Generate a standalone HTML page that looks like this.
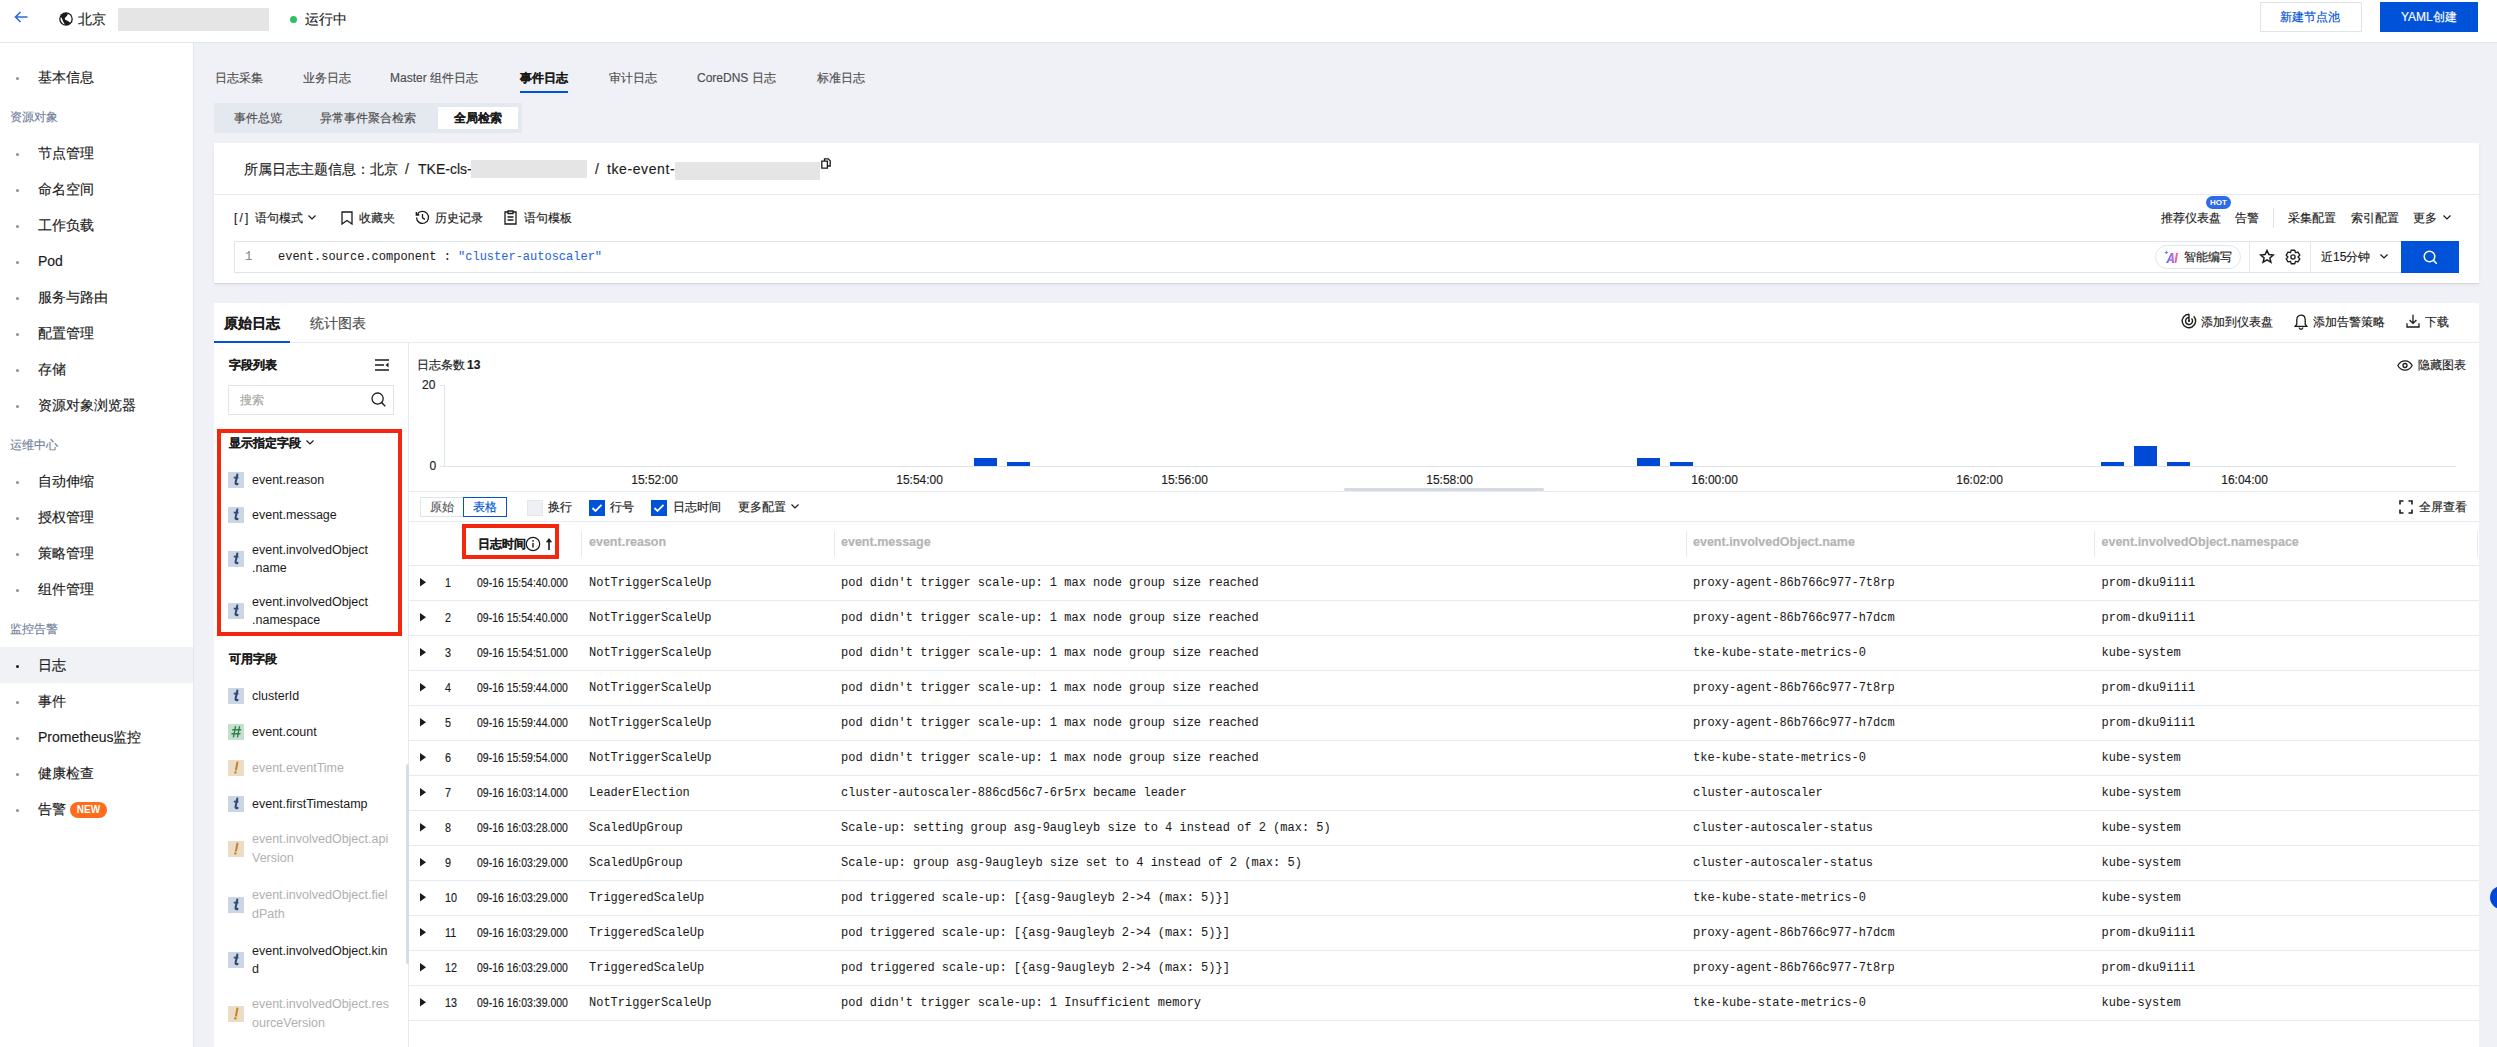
<!DOCTYPE html><html><head><meta charset="utf-8"><style>
*{box-sizing:border-box;margin:0;padding:0}
html,body{width:2497px;height:1047px;overflow:hidden;background:#f0f1f6;font-family:"Liberation Sans",sans-serif;color:#1b1b1b;font-size:12px}
.a{position:absolute}
.t{position:absolute;white-space:nowrap;line-height:20px;-webkit-text-stroke:0.15px}
.mono{font-family:"Liberation Mono",monospace;-webkit-text-stroke:0.05px}
.hdr{left:0;top:0;width:2497px;height:43px;background:#fff;border-bottom:1px solid #e1e5ed}
.side{left:0;top:43px;width:193px;height:1004px;background:#fff}
.panel{background:#fff}
.bd{background:#e5e9f0}
svg{position:absolute;overflow:visible}
</style></head><body>
<div class="a hdr"></div>
<svg style="left:14px;top:11px" width="14" height="12" viewBox="0 0 14 12"><path d="M13.5 6H1.5M6.5 1L1.5 6l5 5" fill="none" stroke="#2c6ae6" stroke-width="1.6"/></svg>
<svg style="left:59px;top:12px" width="14" height="14" viewBox="0 0 14 14"><defs><clipPath id="gc"><circle cx="7" cy="7" r="5.5"/></clipPath></defs><circle cx="7" cy="7" r="6.8" fill="#1b1b1b"/><g clip-path="url(#gc)" fill="#fff"><path d="M0 4.6L2.1 5.1 3.0 6.8 3.9 8.7 4.7 10.5 5.7 12.2 5.8 14 0 14z"/><path d="M9.6 0L14 0 14 11 11.4 10.9 10.3 10.1 9.4 9.3 7.9 8.6 6.1 7.7 5.7 6.5 6.8 5.1 8.0 3.7 8.8 2.2z"/></g></svg>
<div class="t" style="left:78px;top:9.0px;font-size:14px;color:#1b1b1b;font-weight:500;line-height:20px;">北京</div>
<div class="a" style="left:118px;top:8px;width:151px;height:23px;background:#e5e5e5;"></div>
<div class="a" style="left:290px;top:16px;width:7px;height:7px;border-radius:50%;background:#2fbf63"></div>
<div class="t" style="left:305px;top:8.5px;font-size:14px;color:#1b1b1b;font-weight:normal;line-height:20px;">运行中</div>
<div class="a" style="left:2260px;top:2px;width:102px;height:30px;border:1px solid #dfe4ec;background:#fff"></div>
<div class="t" style="left:2280px;top:7.0px;font-size:12px;color:#0052d9;font-weight:normal;line-height:20px;">新建节点池</div>
<div class="a" style="left:2380px;top:2px;width:98px;height:30px;background:#0052d9;"></div>
<div class="t" style="left:2401px;top:7.0px;font-size:12px;color:#fff;font-weight:normal;line-height:20px;">YAML创建</div>
<div class="a side"></div>
<div class="a" style="left:193px;top:43px;width:1px;height:1004px;background:#e1e5ed;"></div>
<div class="a" style="left:16px;top:76.5px;width:3px;height:3px;border-radius:50%;background:#8a8f99"></div>
<div class="t" style="left:38px;top:67.0px;font-size:14px;color:#1b1b1b;font-weight:normal;line-height:20px;">基本信息</div>
<div class="t" style="left:10px;top:107.0px;font-size:12px;color:#72809a;font-weight:normal;line-height:20px;">资源对象</div>
<div class="a" style="left:16px;top:152.5px;width:3px;height:3px;border-radius:50%;background:#8a8f99"></div>
<div class="t" style="left:38px;top:143.0px;font-size:14px;color:#1b1b1b;font-weight:normal;line-height:20px;">节点管理</div>
<div class="a" style="left:16px;top:188.5px;width:3px;height:3px;border-radius:50%;background:#8a8f99"></div>
<div class="t" style="left:38px;top:179.0px;font-size:14px;color:#1b1b1b;font-weight:normal;line-height:20px;">命名空间</div>
<div class="a" style="left:16px;top:224.5px;width:3px;height:3px;border-radius:50%;background:#8a8f99"></div>
<div class="t" style="left:38px;top:215.0px;font-size:14px;color:#1b1b1b;font-weight:normal;line-height:20px;">工作负载</div>
<div class="a" style="left:16px;top:260.5px;width:3px;height:3px;border-radius:50%;background:#8a8f99"></div>
<div class="t" style="left:38px;top:251.0px;font-size:14px;color:#1b1b1b;font-weight:normal;line-height:20px;">Pod</div>
<div class="a" style="left:16px;top:296.5px;width:3px;height:3px;border-radius:50%;background:#8a8f99"></div>
<div class="t" style="left:38px;top:287.0px;font-size:14px;color:#1b1b1b;font-weight:normal;line-height:20px;">服务与路由</div>
<div class="a" style="left:16px;top:332.5px;width:3px;height:3px;border-radius:50%;background:#8a8f99"></div>
<div class="t" style="left:38px;top:323.0px;font-size:14px;color:#1b1b1b;font-weight:normal;line-height:20px;">配置管理</div>
<div class="a" style="left:16px;top:368.5px;width:3px;height:3px;border-radius:50%;background:#8a8f99"></div>
<div class="t" style="left:38px;top:359.0px;font-size:14px;color:#1b1b1b;font-weight:normal;line-height:20px;">存储</div>
<div class="a" style="left:16px;top:404.5px;width:3px;height:3px;border-radius:50%;background:#8a8f99"></div>
<div class="t" style="left:38px;top:395.0px;font-size:14px;color:#1b1b1b;font-weight:normal;line-height:20px;">资源对象浏览器</div>
<div class="t" style="left:10px;top:435.0px;font-size:12px;color:#72809a;font-weight:normal;line-height:20px;">运维中心</div>
<div class="a" style="left:16px;top:480.5px;width:3px;height:3px;border-radius:50%;background:#8a8f99"></div>
<div class="t" style="left:38px;top:471.0px;font-size:14px;color:#1b1b1b;font-weight:normal;line-height:20px;">自动伸缩</div>
<div class="a" style="left:16px;top:516.5px;width:3px;height:3px;border-radius:50%;background:#8a8f99"></div>
<div class="t" style="left:38px;top:507.0px;font-size:14px;color:#1b1b1b;font-weight:normal;line-height:20px;">授权管理</div>
<div class="a" style="left:16px;top:552.5px;width:3px;height:3px;border-radius:50%;background:#8a8f99"></div>
<div class="t" style="left:38px;top:543.0px;font-size:14px;color:#1b1b1b;font-weight:normal;line-height:20px;">策略管理</div>
<div class="a" style="left:16px;top:588.5px;width:3px;height:3px;border-radius:50%;background:#8a8f99"></div>
<div class="t" style="left:38px;top:579.0px;font-size:14px;color:#1b1b1b;font-weight:normal;line-height:20px;">组件管理</div>
<div class="t" style="left:10px;top:619.0px;font-size:12px;color:#72809a;font-weight:normal;line-height:20px;">监控告警</div>
<div class="a" style="left:0px;top:647px;width:193px;height:36px;background:#f0f2f6;"></div>
<div class="a" style="left:16px;top:664.5px;width:3px;height:3px;border-radius:50%;background:#1b1b1b"></div>
<div class="t" style="left:38px;top:655.0px;font-size:14px;color:#1b1b1b;font-weight:normal;line-height:20px;">日志</div>
<div class="a" style="left:16px;top:700.5px;width:3px;height:3px;border-radius:50%;background:#8a8f99"></div>
<div class="t" style="left:38px;top:691.0px;font-size:14px;color:#1b1b1b;font-weight:normal;line-height:20px;">事件</div>
<div class="a" style="left:16px;top:736.5px;width:3px;height:3px;border-radius:50%;background:#8a8f99"></div>
<div class="t" style="left:38px;top:727.0px;font-size:14px;color:#1b1b1b;font-weight:normal;line-height:20px;">Prometheus监控</div>
<div class="a" style="left:16px;top:772.5px;width:3px;height:3px;border-radius:50%;background:#8a8f99"></div>
<div class="t" style="left:38px;top:763.0px;font-size:14px;color:#1b1b1b;font-weight:normal;line-height:20px;">健康检查</div>
<div class="a" style="left:16px;top:808.5px;width:3px;height:3px;border-radius:50%;background:#8a8f99"></div>
<div class="t" style="left:38px;top:799.0px;font-size:14px;color:#1b1b1b;font-weight:normal;line-height:20px;">告警</div>
<div class="a" style="left:70px;top:802px;width:37px;height:16px;border-radius:8px;background:#ff6c1a;color:#fff;font-size:10px;font-weight:bold;line-height:16px;text-align:center">NEW</div>
<div class="t" style="left:215px;top:68.0px;font-size:12px;color:#4d4d4d;font-weight:normal;line-height:20px;">日志采集</div>
<div class="t" style="left:303px;top:68.0px;font-size:12px;color:#4d4d4d;font-weight:normal;line-height:20px;">业务日志</div>
<div class="t" style="left:390px;top:68.0px;font-size:12px;color:#4d4d4d;font-weight:normal;line-height:20px;">Master 组件日志</div>
<div class="t" style="left:520px;top:68.0px;font-size:12px;color:#1b1b1b;font-weight:bold;line-height:20px;">事件日志</div>
<div class="t" style="left:609px;top:68.0px;font-size:12px;color:#4d4d4d;font-weight:normal;line-height:20px;">审计日志</div>
<div class="t" style="left:697px;top:68.0px;font-size:12px;color:#4d4d4d;font-weight:normal;line-height:20px;">CoreDNS 日志</div>
<div class="t" style="left:817px;top:68.0px;font-size:12px;color:#4d4d4d;font-weight:normal;line-height:20px;">标准日志</div>
<div class="a" style="left:520px;top:91px;width:48px;height:2px;background:#0052d9;"></div>
<div class="a" style="left:214px;top:103px;width:308px;height:30px;background:#e4e8ef;"></div>
<div class="a" style="left:438px;top:107px;width:80px;height:22px;background:#fff;"></div>
<div class="t" style="left:234px;top:107.5px;font-size:12px;color:#4d4d4d;font-weight:normal;line-height:20px;">事件总览</div>
<div class="t" style="left:320px;top:107.5px;font-size:12px;color:#4d4d4d;font-weight:normal;line-height:20px;">异常事件聚合检索</div>
<div class="t" style="left:454px;top:107.5px;font-size:12px;color:#1b1b1b;font-weight:bold;line-height:20px;">全局检索</div>
<div class="a panel" style="left:214px;top:143px;width:2265px;height:140px;box-shadow:0 1px 0 #d4d6dc,0 2px 4px rgba(0,0,0,.05)"></div>
<div class="a" style="left:214px;top:194px;width:2265px;height:1px;background:#e5e9f0;"></div>
<div class="t" style="left:244px;top:159.0px;font-size:14px;color:#1b1b1b;font-weight:normal;line-height:20px;">所属日志主题信息：</div>
<div class="t" style="left:370px;top:159.0px;font-size:14px;color:#1b1b1b;font-weight:normal;line-height:20px;">北京</div>
<div class="t" style="left:405px;top:159.0px;font-size:14px;color:#1b1b1b;font-weight:normal;line-height:20px;">/</div>
<div class="t" style="left:418px;top:159.0px;font-size:14px;color:#1b1b1b;font-weight:normal;line-height:20px;">TKE-cls-</div>
<div class="a" style="left:471px;top:160px;width:116px;height:18px;background:#e5e5e5;"></div>
<div class="t" style="left:595px;top:159.0px;font-size:14px;color:#1b1b1b;font-weight:normal;line-height:20px;">/</div>
<div class="t" style="left:607px;top:159.0px;font-size:14px;color:#1b1b1b;font-weight:normal;line-height:20px;letter-spacing:0.6px">tke-event-</div>
<div class="a" style="left:675px;top:162px;width:145px;height:18px;background:#e5e5e5;"></div>
<svg style="left:821px;top:158px" width="10" height="11" viewBox="0 0 10 11"><path d="M3.5 3V.8h3.7L9.2 2.8V8H7M.8 3.2h5.6V10.2H.8z" fill="none" stroke="#1b1b1b" stroke-width="1.3"/></svg>
<div class="t" style="left:234px;top:207.5px;font-size:12px;color:#1b1b1b;font-weight:normal;line-height:20px;letter-spacing:2.2px">[/]</div>
<div class="t" style="left:255px;top:207.5px;font-size:12px;color:#1b1b1b;font-weight:normal;line-height:20px;">语句模式</div>
<svg style="left:308px;top:215px" width="8" height="5" viewBox="0 0 8 5"><path d="M.5.5L4 4 7.5.5" fill="none" stroke="#1b1b1b" stroke-width="1.2"/></svg>
<svg style="left:341px;top:211px" width="12" height="14" viewBox="0 0 12 14"><path d="M1 1h10v12L6 9.5 1 13z" fill="none" stroke="#1b1b1b" stroke-width="1.3"/></svg>
<div class="t" style="left:359px;top:207.5px;font-size:12px;color:#1b1b1b;font-weight:normal;line-height:20px;">收藏夹</div>
<svg style="left:415px;top:210px" width="15" height="15" viewBox="0 0 15 15"><path d="M2.2 4.6A6 6 0 1 1 1.5 7.5M1.3 2v3h3M7.5 4v3.8l2.4 1.6" fill="none" stroke="#1b1b1b" stroke-width="1.3"/></svg>
<div class="t" style="left:435px;top:207.5px;font-size:12px;color:#1b1b1b;font-weight:normal;line-height:20px;">历史记录</div>
<svg style="left:504px;top:210px" width="13" height="15" viewBox="0 0 13 15"><path d="M4 2H1v12h11V2H9M4 1h5v2.5H4zM3.5 7h6M3.5 10h6" fill="none" stroke="#1b1b1b" stroke-width="1.3"/></svg>
<div class="t" style="left:524px;top:207.5px;font-size:12px;color:#1b1b1b;font-weight:normal;line-height:20px;">语句模板</div>
<div class="t" style="left:2161px;top:207.5px;font-size:12px;color:#1b1b1b;font-weight:normal;line-height:20px;">推荐仪表盘</div>
<div class="a" style="left:2206px;top:196px;width:25px;height:13px;border-radius:7px;background:#2e6be6;color:#fff;font-size:8px;font-weight:bold;line-height:13px;text-align:center">HOT</div>
<div class="t" style="left:2235px;top:207.5px;font-size:12px;color:#1b1b1b;font-weight:normal;line-height:20px;">告警</div>
<div class="a" style="left:2273px;top:208px;width:1px;height:20px;background:#dfe3ea;"></div>
<div class="t" style="left:2288px;top:207.5px;font-size:12px;color:#1b1b1b;font-weight:normal;line-height:20px;">采集配置</div>
<div class="t" style="left:2351px;top:207.5px;font-size:12px;color:#1b1b1b;font-weight:normal;line-height:20px;">索引配置</div>
<div class="t" style="left:2413px;top:207.5px;font-size:12px;color:#1b1b1b;font-weight:normal;line-height:20px;">更多</div>
<svg style="left:2443px;top:215px" width="8" height="5" viewBox="0 0 8 5"><path d="M.5.5L4 4 7.5.5" fill="none" stroke="#1b1b1b" stroke-width="1.2"/></svg>
<div class="a" style="left:234px;top:241px;width:2168px;height:32px;border:1px solid #dfe3ea;background:#fff"></div>
<div class="t" style="left:245px;top:246.5px;font-size:12px;color:#888;font-weight:normal;line-height:20px;font-family:'Liberation Mono',monospace">1</div>
<div class="t mono" style="left:278px;top:246.5px;font-size:12px;color:#1b1b1b">event.source.component : <span style="color:#1f66e0">"cluster-autoscaler"</span></div>
<div class="a" style="left:2155px;top:245px;width:86px;height:24px;border:1px solid #e3e6ec;border-radius:12px"></div>
<svg style="left:2164px;top:250px" width="16" height="14" viewBox="0 0 16 14"><defs><linearGradient id="ag" x1="0" x2="1"><stop offset="0" stop-color="#4a7bff"/><stop offset=".5" stop-color="#b85cff"/><stop offset="1" stop-color="#ff6a6a"/></linearGradient></defs><path d="M2.4 0.4Q2.7 2.1 4.4 2.4 2.7 2.7 2.4 4.4 2.1 2.7 0.4 2.4 2.1 2.1 2.4 0.4z" fill="#5b7cff"/><path d="M2 13L7 3h2.2L10 13H8l-.2-2.2H5.3L4.2 13zM6 9.2h1.7L7.5 5.6zM12 3h2l-1.6 10h-2z" fill="url(#ag)"/></svg>
<div class="t" style="left:2184px;top:247.0px;font-size:12px;color:#1b1b1b;font-weight:normal;line-height:20px;">智能编写</div>
<div class="a" style="left:2249px;top:242px;width:1px;height:30px;background:#e3e6ec;"></div>
<svg style="left:2259px;top:249px" width="16" height="16" viewBox="0 0 16 16"><path d="M8 1.6l1.9 4 4.3.4-3.3 2.9 1 4.3L8 10.9 4.1 13.2l1-4.3L1.8 6l4.3-.4z" fill="none" stroke="#1b1b1b" stroke-width="1.5" stroke-linejoin="miter"/></svg>
<svg style="left:2285px;top:249px" width="16" height="16" viewBox="0 0 16 16"><path d="M5.52 3.66 L6.20 1.24 L9.80 1.24 L10.48 3.66 L10.52 3.68 L12.96 3.06 L14.76 6.18 L13.00 7.98 L13.00 8.02 L14.76 9.82 L12.96 12.94 L10.52 12.32 L10.48 12.34 L9.80 14.76 L6.20 14.76 L5.52 12.34 L5.48 12.32 L3.04 12.94 L1.24 9.82 L3.00 8.02 L3.00 7.98 L1.24 6.18 L3.04 3.06 L5.48 3.68Z" fill="none" stroke="#1b1b1b" stroke-width="1.3" stroke-linejoin="round"/><circle cx="8" cy="8" r="2.1" fill="none" stroke="#1b1b1b" stroke-width="1.3"/></svg>
<div class="a" style="left:2310px;top:242px;width:1px;height:30px;background:#e3e6ec;"></div>
<div class="t" style="left:2321px;top:247.0px;font-size:12px;color:#1b1b1b;font-weight:normal;line-height:20px;">近15分钟</div>
<svg style="left:2380px;top:254px" width="8" height="5" viewBox="0 0 8 5"><path d="M.5.5L4 4 7.5.5" fill="none" stroke="#1b1b1b" stroke-width="1.2"/></svg>
<div class="a" style="left:2401px;top:241px;width:58px;height:32px;background:#0052d9;"></div>
<svg style="left:2423px;top:250px" width="15" height="15" viewBox="0 0 15 15"><circle cx="6.5" cy="6.5" r="5.3" fill="none" stroke="#fff" stroke-width="1.5"/><path d="M10.4 10.4l3.4 3.4" stroke="#fff" stroke-width="1.5"/></svg>
<div class="a panel" style="left:214px;top:303px;width:2265px;height:744px"></div>
<div class="a" style="left:214px;top:342px;width:2265px;height:1px;background:#e5e9f0;"></div>
<div class="t" style="left:224px;top:313.0px;font-size:14px;color:#1b1b1b;font-weight:bold;line-height:20px;">原始日志</div>
<div class="t" style="left:310px;top:313.0px;font-size:14px;color:#4d4d4d;font-weight:normal;line-height:20px;">统计图表</div>
<div class="a" style="left:214px;top:341px;width:76px;height:2px;background:#0052d9;"></div>
<svg style="left:2181px;top:313px" width="16" height="16" viewBox="0 0 16 16"><path d="M8 1.3A6.7 6.7 0 1 0 12.7 3.3M8 4.5A3.5 3.5 0 1 0 10.5 5.5M8 1.3V8" fill="none" stroke="#1b1b1b" stroke-width="1.4"/><circle cx="8" cy="8" r="1.1" fill="#1b1b1b"/></svg>
<div class="t" style="left:2201px;top:312.0px;font-size:12px;color:#1b1b1b;font-weight:normal;line-height:20px;">添加到仪表盘</div>
<svg style="left:2294px;top:314px" width="14" height="16" viewBox="0 0 14 16"><path d="M7 1.2c2.6 0 4.2 2 4.2 4.6v4.4l1.6 2.2H1.2l1.6-2.2V5.8C2.8 3.2 4.4 1.2 7 1.2zM5.2 13.6a1.8 1.8 0 0 0 3.6 0" fill="none" stroke="#1b1b1b" stroke-width="1.3"/></svg>
<div class="t" style="left:2313px;top:311.5px;font-size:12px;color:#1b1b1b;font-weight:normal;line-height:20px;">添加告警策略</div>
<svg style="left:2406px;top:314px" width="14" height="14" viewBox="0 0 14 14"><path d="M7 .8v8.4M3.6 6l3.4 3.4L10.4 6M1 9.2v3.8h12V9.2" fill="none" stroke="#1b1b1b" stroke-width="1.3"/></svg>
<div class="t" style="left:2425px;top:312.0px;font-size:12px;color:#1b1b1b;font-weight:normal;line-height:20px;">下载</div>
<div class="a" style="left:408px;top:343px;width:1px;height:704px;background:#e5e9f0;"></div>
<div class="t" style="left:228.5px;top:355.0px;font-size:12px;color:#1b1b1b;font-weight:bold;line-height:20px;">字段列表</div>
<svg style="left:375px;top:359px" width="14" height="12" viewBox="0 0 14 12"><path d="M0 1h14M0 6h9M0 11h14" stroke="#1b1b1b" stroke-width="1.3"/><path d="M13.5 3.6v4.8L10.6 6z" fill="#1b1b1b"/></svg>
<div class="a" style="left:228px;top:385px;width:166px;height:30px;border:1px solid #dfe3ea"></div>
<div class="t" style="left:240px;top:390.0px;font-size:12px;color:#a6a6a6;font-weight:normal;line-height:20px;">搜索</div>
<svg style="left:371px;top:392px" width="15" height="15" viewBox="0 0 15 15"><circle cx="6.6" cy="6.6" r="5.6" fill="none" stroke="#1b1b1b" stroke-width="1.3"/><path d="M10.6 10.6l3.6 3.6" stroke="#1b1b1b" stroke-width="1.4"/></svg>
<div class="a" style="left:217px;top:429px;width:185px;height:207px;border:4px solid #f5260e"></div>
<div class="t" style="left:228.5px;top:432.5px;font-size:12px;color:#1b1b1b;font-weight:bold;line-height:20px;">显示指定字段</div>
<svg style="left:306px;top:440px" width="8" height="5" viewBox="0 0 8 5"><path d="M.5.5L4 4 7.5.5" fill="none" stroke="#1b1b1b" stroke-width="1.2"/></svg>
<svg style="left:228px;top:471.5px" width="16" height="16" viewBox="0 0 16 16"><rect width="16" height="16" fill="#cbd5e3"/><path d="M9.3 2.6L7.6 10.6c-.3 1.4.6 1.8 1.9 1.3" fill="none" stroke="#2d4a77" stroke-width="2.1" stroke-linecap="round"/><path d="M5.8 5.6h4.6" stroke="#2d4a77" stroke-width="1.8"/></svg>
<div class="a" style="left:252px;top:470.5px;font-size:12.5px;line-height:18px;color:#1b1b1b;white-space:nowrap">event.reason</div>
<svg style="left:228px;top:507px" width="16" height="16" viewBox="0 0 16 16"><rect width="16" height="16" fill="#cbd5e3"/><path d="M9.3 2.6L7.6 10.6c-.3 1.4.6 1.8 1.9 1.3" fill="none" stroke="#2d4a77" stroke-width="2.1" stroke-linecap="round"/><path d="M5.8 5.6h4.6" stroke="#2d4a77" stroke-width="1.8"/></svg>
<div class="a" style="left:252px;top:506.0px;font-size:12.5px;line-height:18px;color:#1b1b1b;white-space:nowrap">event.message</div>
<svg style="left:228px;top:551px" width="16" height="16" viewBox="0 0 16 16"><rect width="16" height="16" fill="#cbd5e3"/><path d="M9.3 2.6L7.6 10.6c-.3 1.4.6 1.8 1.9 1.3" fill="none" stroke="#2d4a77" stroke-width="2.1" stroke-linecap="round"/><path d="M5.8 5.6h4.6" stroke="#2d4a77" stroke-width="1.8"/></svg>
<div class="a" style="left:252px;top:541.0px;font-size:12.5px;line-height:18px;color:#1b1b1b;white-space:nowrap">event.involvedObject<br>.name</div>
<svg style="left:228px;top:603px" width="16" height="16" viewBox="0 0 16 16"><rect width="16" height="16" fill="#cbd5e3"/><path d="M9.3 2.6L7.6 10.6c-.3 1.4.6 1.8 1.9 1.3" fill="none" stroke="#2d4a77" stroke-width="2.1" stroke-linecap="round"/><path d="M5.8 5.6h4.6" stroke="#2d4a77" stroke-width="1.8"/></svg>
<div class="a" style="left:252px;top:593.0px;font-size:12.5px;line-height:18px;color:#1b1b1b;white-space:nowrap">event.involvedObject<br>.namespace</div>
<div class="t" style="left:228.5px;top:649.0px;font-size:12px;color:#1b1b1b;font-weight:bold;line-height:20px;">可用字段</div>
<svg style="left:228px;top:687.5px" width="16" height="16" viewBox="0 0 16 16"><rect width="16" height="16" fill="#cbd5e3"/><path d="M9.3 2.6L7.6 10.6c-.3 1.4.6 1.8 1.9 1.3" fill="none" stroke="#2d4a77" stroke-width="2.1" stroke-linecap="round"/><path d="M5.8 5.6h4.6" stroke="#2d4a77" stroke-width="1.8"/></svg>
<div class="a" style="left:252px;top:686.5px;font-size:12.5px;line-height:18px;color:#1b1b1b;white-space:nowrap">clusterId</div>
<svg style="left:228px;top:723.5px" width="16" height="16" viewBox="0 0 16 16"><rect width="16" height="16" fill="#c4e0cd"/><path d="M7.6 2.2L5.4 13.4M11.6 2.2L9.4 13.4M4.2 5.8h9M3.4 9.8h9" fill="none" stroke="#347f50" stroke-width="1.45"/></svg>
<div class="a" style="left:252px;top:722.5px;font-size:12.5px;line-height:18px;color:#1b1b1b;white-space:nowrap">event.count</div>
<svg style="left:228px;top:759.5px" width="16" height="16" viewBox="0 0 16 16"><rect width="16" height="16" fill="#ecdcc6"/><path d="M9.4 2.6L8.0 9.6" fill="none" stroke="#c38530" stroke-width="2.1" stroke-linecap="round"/><circle cx="7.4" cy="12.4" r="1.2" fill="#c38530"/></svg>
<div class="a" style="left:252px;top:758.5px;font-size:12.5px;line-height:18px;color:#b0b0b0;white-space:nowrap">event.eventTime</div>
<svg style="left:228px;top:795.5px" width="16" height="16" viewBox="0 0 16 16"><rect width="16" height="16" fill="#cbd5e3"/><path d="M9.3 2.6L7.6 10.6c-.3 1.4.6 1.8 1.9 1.3" fill="none" stroke="#2d4a77" stroke-width="2.1" stroke-linecap="round"/><path d="M5.8 5.6h4.6" stroke="#2d4a77" stroke-width="1.8"/></svg>
<div class="a" style="left:252px;top:794.5px;font-size:12.5px;line-height:18px;color:#1b1b1b;white-space:nowrap">event.firstTimestamp</div>
<svg style="left:228px;top:841px" width="16" height="16" viewBox="0 0 16 16"><rect width="16" height="16" fill="#ecdcc6"/><path d="M9.4 2.6L8.0 9.6" fill="none" stroke="#c38530" stroke-width="2.1" stroke-linecap="round"/><circle cx="7.4" cy="12.4" r="1.2" fill="#c38530"/></svg>
<div class="a" style="left:252px;top:829.5px;font-size:12.5px;line-height:19.5px;color:#b0b0b0;white-space:nowrap">event.involvedObject.api<br>Version</div>
<svg style="left:228px;top:897px" width="16" height="16" viewBox="0 0 16 16"><rect width="16" height="16" fill="#cbd5e3"/><path d="M9.3 2.6L7.6 10.6c-.3 1.4.6 1.8 1.9 1.3" fill="none" stroke="#2d4a77" stroke-width="2.1" stroke-linecap="round"/><path d="M5.8 5.6h4.6" stroke="#2d4a77" stroke-width="1.8"/></svg>
<div class="a" style="left:252px;top:885.5px;font-size:12.5px;line-height:19.5px;color:#b0b0b0;white-space:nowrap">event.involvedObject.fiel<br>dPath</div>
<svg style="left:228px;top:951.5px" width="16" height="16" viewBox="0 0 16 16"><rect width="16" height="16" fill="#cbd5e3"/><path d="M9.3 2.6L7.6 10.6c-.3 1.4.6 1.8 1.9 1.3" fill="none" stroke="#2d4a77" stroke-width="2.1" stroke-linecap="round"/><path d="M5.8 5.6h4.6" stroke="#2d4a77" stroke-width="1.8"/></svg>
<div class="a" style="left:252px;top:941.5px;font-size:12.5px;line-height:18px;color:#1b1b1b;white-space:nowrap">event.involvedObject.kin<br>d</div>
<svg style="left:228px;top:1005.5px" width="16" height="16" viewBox="0 0 16 16"><rect width="16" height="16" fill="#ecdcc6"/><path d="M9.4 2.6L8.0 9.6" fill="none" stroke="#c38530" stroke-width="2.1" stroke-linecap="round"/><circle cx="7.4" cy="12.4" r="1.2" fill="#c38530"/></svg>
<div class="a" style="left:252px;top:994.5px;font-size:12.5px;line-height:19px;color:#b0b0b0;white-space:nowrap">event.involvedObject.res<br>ourceVersion</div>
<div class="a" style="left:405.5px;top:764px;width:3px;height:200px;border-radius:2px;background:#d7dbe3"></div>
<div class="t" style="left:417px;top:354.5px;font-size:12px;color:#1b1b1b;font-weight:normal;line-height:20px;">日志条数<b style="margin-left:2px">13</b></div>
<svg style="left:2397px;top:360px" width="16" height="11" viewBox="0 0 16 11"><path d="M.8 5.5C2.6 2.4 5 .8 8 .8s5.4 1.6 7.2 4.7C13.4 8.6 11 10.2 8 10.2S2.6 8.6.8 5.5z" fill="none" stroke="#1b1b1b" stroke-width="1.3"/><circle cx="8" cy="5.5" r="2" fill="none" stroke="#1b1b1b" stroke-width="1.3"/></svg>
<div class="t" style="left:2417.5px;top:355.0px;font-size:12px;color:#1b1b1b;font-weight:normal;line-height:20px;">隐藏图表</div>
<div class="t" style="left:422px;top:375.0px;font-size:12px;color:#1b1b1b;font-weight:normal;line-height:20px;">20</div>
<div class="t" style="left:429.5px;top:456.0px;font-size:12px;color:#1b1b1b;font-weight:normal;line-height:20px;">0</div>
<div class="a" style="left:440px;top:385px;width:4px;height:1px;background:#dfe3ea;"></div>
<div class="a" style="left:444px;top:385px;width:1px;height:82px;background:#dfe3ea;"></div>
<div class="a" style="left:440px;top:466px;width:2016px;height:1px;background:#dfe3ea;"></div>
<div class="t" style="left:614.6px;top:469.5px;width:80px;text-align:center;font-size:12px;color:#1b1b1b;line-height:20px">15:52:00</div>
<div class="t" style="left:879.6px;top:469.5px;width:80px;text-align:center;font-size:12px;color:#1b1b1b;line-height:20px">15:54:00</div>
<div class="t" style="left:1144.6px;top:469.5px;width:80px;text-align:center;font-size:12px;color:#1b1b1b;line-height:20px">15:56:00</div>
<div class="t" style="left:1409.6px;top:469.5px;width:80px;text-align:center;font-size:12px;color:#1b1b1b;line-height:20px">15:58:00</div>
<div class="t" style="left:1674.6px;top:469.5px;width:80px;text-align:center;font-size:12px;color:#1b1b1b;line-height:20px">16:00:00</div>
<div class="t" style="left:1939.6px;top:469.5px;width:80px;text-align:center;font-size:12px;color:#1b1b1b;line-height:20px">16:02:00</div>
<div class="t" style="left:2204.6px;top:469.5px;width:80px;text-align:center;font-size:12px;color:#1b1b1b;line-height:20px">16:04:00</div>
<div class="a" style="left:974px;top:458px;width:23px;height:8px;background:#0049d6;"></div>
<div class="a" style="left:1007px;top:462px;width:23px;height:4px;background:#0049d6;"></div>
<div class="a" style="left:1637px;top:458px;width:23px;height:8px;background:#0049d6;"></div>
<div class="a" style="left:1670px;top:462px;width:23px;height:4px;background:#0049d6;"></div>
<div class="a" style="left:2101px;top:462px;width:23px;height:4px;background:#0049d6;"></div>
<div class="a" style="left:2134px;top:446px;width:23px;height:20px;background:#0049d6;"></div>
<div class="a" style="left:2167px;top:462px;width:23px;height:4px;background:#0049d6;"></div>
<div class="a" style="left:1344px;top:488px;width:200px;height:3px;background:#d5d9e1;border-radius:2px"></div>
<div class="a" style="left:409px;top:491px;width:2070px;height:1px;background:#e5e9f0;"></div>
<div class="a" style="left:420px;top:497px;width:44px;height:20px;border:1px solid #dfe3ea;border-right:none"></div>
<div class="t" style="left:430px;top:497.0px;font-size:12px;color:#555;font-weight:normal;line-height:20px;">原始</div>
<div class="a" style="left:463px;top:497px;width:44px;height:20px;border:1px solid #0052d9"></div>
<div class="t" style="left:473px;top:497.0px;font-size:12px;color:#0052d9;font-weight:normal;line-height:20px;">表格</div>
<div class="a" style="left:527px;top:500px;width:16px;height:16px;border:1px solid #e2e6ed;background:#eef0f4"></div>
<div class="t" style="left:547.5px;top:497.0px;font-size:12px;color:#1b1b1b;font-weight:normal;line-height:20px;">换行</div>
<div class="a" style="left:589px;top:500px;width:16px;height:16px;background:#0052d9"></div>
<svg style="left:591px;top:503px" width="12" height="10" viewBox="0 0 12 10"><path d="M1.5 5l3 3L10.5 1.8" fill="none" stroke="#fff" stroke-width="1.8"/></svg>
<div class="t" style="left:609.5px;top:497.0px;font-size:12px;color:#1b1b1b;font-weight:normal;line-height:20px;">行号</div>
<div class="a" style="left:651px;top:500px;width:16px;height:16px;background:#0052d9"></div>
<svg style="left:653px;top:503px" width="12" height="10" viewBox="0 0 12 10"><path d="M1.5 5l3 3L10.5 1.8" fill="none" stroke="#fff" stroke-width="1.8"/></svg>
<div class="t" style="left:672.5px;top:497.0px;font-size:12px;color:#1b1b1b;font-weight:normal;line-height:20px;">日志时间</div>
<div class="t" style="left:737.5px;top:497.0px;font-size:12px;color:#1b1b1b;font-weight:normal;line-height:20px;">更多配置</div>
<svg style="left:791px;top:504px" width="8" height="5" viewBox="0 0 8 5"><path d="M.5.5L4 4 7.5.5" fill="none" stroke="#1b1b1b" stroke-width="1.2"/></svg>
<svg style="left:2399px;top:500px" width="14" height="14" viewBox="0 0 14 14"><path d="M1 4.5V1h3.5M9.5 1H13v3.5M13 9.5V13H9.5M4.5 13H1V9.5" fill="none" stroke="#1b1b1b" stroke-width="1.6"/></svg>
<div class="t" style="left:2418.5px;top:497.0px;font-size:12px;color:#1b1b1b;font-weight:normal;line-height:20px;">全屏查看</div>
<div class="a" style="left:409px;top:521px;width:2070px;height:1px;background:#e5e9f0;"></div>
<div class="a" style="left:462px;top:524px;width:97px;height:35px;border:4px solid #f5260e"></div>
<div class="t" style="left:478px;top:533.5px;font-size:12px;color:#1b1b1b;font-weight:bold;line-height:20px;">日志时间</div>
<svg style="left:525px;top:536px" width="16" height="16" viewBox="0 0 16 16"><circle cx="8" cy="8" r="6.7" fill="none" stroke="#1b1b1b" stroke-width="1.2"/><path d="M8 7v4.6" stroke="#1b1b1b" stroke-width="1.4"/><circle cx="8" cy="4.8" r=".9" fill="#1b1b1b"/></svg>
<svg style="left:545px;top:538px" width="8" height="12" viewBox="0 0 8 12"><path d="M4 1.5V12" stroke="#1b1b1b" stroke-width="1.6"/><path d="M4 0L7.2 4.2H.8z" fill="#1b1b1b"/></svg>
<div class="a" style="left:581px;top:531px;width:1px;height:26px;background:#e5e9f0;"></div>
<div class="t" style="left:589px;top:532.0px;font-size:12.5px;color:#b4b4b4;font-weight:bold;line-height:20px;">event.reason</div>
<div class="a" style="left:834px;top:531px;width:1px;height:26px;background:#e5e9f0;"></div>
<div class="t" style="left:841px;top:532.0px;font-size:12.5px;color:#b4b4b4;font-weight:bold;line-height:20px;">event.message</div>
<div class="a" style="left:1686px;top:531px;width:1px;height:26px;background:#e5e9f0;"></div>
<div class="t" style="left:1693px;top:532.0px;font-size:12.5px;color:#b4b4b4;font-weight:bold;line-height:20px;">event.involvedObject.name</div>
<div class="a" style="left:2094px;top:531px;width:1px;height:26px;background:#e5e9f0;"></div>
<div class="t" style="left:2101.5px;top:532.0px;font-size:12.5px;color:#b4b4b4;font-weight:bold;line-height:20px;">event.involvedObject.namespace</div>
<div class="a" style="left:2477px;top:531px;width:1px;height:26px;background:#e5e9f0;"></div>
<div class="a" style="left:409px;top:565px;width:2070px;height:1px;background:#e5e9f0;"></div>
<svg style="left:420px;top:578.3px" width="6" height="8.4" viewBox="0 0 6 8.4"><path d="M0 0L6 4.2 0 8.4z" fill="#1b1b1b"/></svg>
<div class="t" style="left:445px;top:572.5px;font-size:12px;color:#1b1b1b;font-weight:normal;line-height:20px;transform:scaleX(.9);transform-origin:0 50%">1</div>
<div class="t" style="left:477px;top:572.5px;font-size:12px;color:#1b1b1b;font-weight:normal;line-height:20px;transform:scaleX(.873);transform-origin:0 50%">09-16 15:54:40.000</div>
<div class="t mono" style="left:589px;top:572.5px;font-size:12px;color:#1b1b1b">NotTriggerScaleUp</div>
<div class="t mono" style="left:841px;top:572.5px;font-size:12px;color:#1b1b1b">pod didn't trigger scale-up: 1 max node group size reached</div>
<div class="t mono" style="left:1693px;top:572.5px;font-size:12px;color:#1b1b1b">proxy-agent-86b766c977-7t8rp</div>
<div class="t mono" style="left:2101.5px;top:572.5px;font-size:12px;color:#1b1b1b">prom-dku9i1i1</div>
<div class="a" style="left:409px;top:600px;width:2070px;height:1px;background:#e5e9f0;"></div>
<svg style="left:420px;top:613.3px" width="6" height="8.4" viewBox="0 0 6 8.4"><path d="M0 0L6 4.2 0 8.4z" fill="#1b1b1b"/></svg>
<div class="t" style="left:445px;top:607.5px;font-size:12px;color:#1b1b1b;font-weight:normal;line-height:20px;transform:scaleX(.9);transform-origin:0 50%">2</div>
<div class="t" style="left:477px;top:607.5px;font-size:12px;color:#1b1b1b;font-weight:normal;line-height:20px;transform:scaleX(.873);transform-origin:0 50%">09-16 15:54:40.000</div>
<div class="t mono" style="left:589px;top:607.5px;font-size:12px;color:#1b1b1b">NotTriggerScaleUp</div>
<div class="t mono" style="left:841px;top:607.5px;font-size:12px;color:#1b1b1b">pod didn't trigger scale-up: 1 max node group size reached</div>
<div class="t mono" style="left:1693px;top:607.5px;font-size:12px;color:#1b1b1b">proxy-agent-86b766c977-h7dcm</div>
<div class="t mono" style="left:2101.5px;top:607.5px;font-size:12px;color:#1b1b1b">prom-dku9i1i1</div>
<div class="a" style="left:409px;top:635px;width:2070px;height:1px;background:#e5e9f0;"></div>
<svg style="left:420px;top:648.3px" width="6" height="8.4" viewBox="0 0 6 8.4"><path d="M0 0L6 4.2 0 8.4z" fill="#1b1b1b"/></svg>
<div class="t" style="left:445px;top:642.5px;font-size:12px;color:#1b1b1b;font-weight:normal;line-height:20px;transform:scaleX(.9);transform-origin:0 50%">3</div>
<div class="t" style="left:477px;top:642.5px;font-size:12px;color:#1b1b1b;font-weight:normal;line-height:20px;transform:scaleX(.873);transform-origin:0 50%">09-16 15:54:51.000</div>
<div class="t mono" style="left:589px;top:642.5px;font-size:12px;color:#1b1b1b">NotTriggerScaleUp</div>
<div class="t mono" style="left:841px;top:642.5px;font-size:12px;color:#1b1b1b">pod didn't trigger scale-up: 1 max node group size reached</div>
<div class="t mono" style="left:1693px;top:642.5px;font-size:12px;color:#1b1b1b">tke-kube-state-metrics-0</div>
<div class="t mono" style="left:2101.5px;top:642.5px;font-size:12px;color:#1b1b1b">kube-system</div>
<div class="a" style="left:409px;top:670px;width:2070px;height:1px;background:#e5e9f0;"></div>
<svg style="left:420px;top:683.3px" width="6" height="8.4" viewBox="0 0 6 8.4"><path d="M0 0L6 4.2 0 8.4z" fill="#1b1b1b"/></svg>
<div class="t" style="left:445px;top:677.5px;font-size:12px;color:#1b1b1b;font-weight:normal;line-height:20px;transform:scaleX(.9);transform-origin:0 50%">4</div>
<div class="t" style="left:477px;top:677.5px;font-size:12px;color:#1b1b1b;font-weight:normal;line-height:20px;transform:scaleX(.873);transform-origin:0 50%">09-16 15:59:44.000</div>
<div class="t mono" style="left:589px;top:677.5px;font-size:12px;color:#1b1b1b">NotTriggerScaleUp</div>
<div class="t mono" style="left:841px;top:677.5px;font-size:12px;color:#1b1b1b">pod didn't trigger scale-up: 1 max node group size reached</div>
<div class="t mono" style="left:1693px;top:677.5px;font-size:12px;color:#1b1b1b">proxy-agent-86b766c977-7t8rp</div>
<div class="t mono" style="left:2101.5px;top:677.5px;font-size:12px;color:#1b1b1b">prom-dku9i1i1</div>
<div class="a" style="left:409px;top:705px;width:2070px;height:1px;background:#e5e9f0;"></div>
<svg style="left:420px;top:718.3px" width="6" height="8.4" viewBox="0 0 6 8.4"><path d="M0 0L6 4.2 0 8.4z" fill="#1b1b1b"/></svg>
<div class="t" style="left:445px;top:712.5px;font-size:12px;color:#1b1b1b;font-weight:normal;line-height:20px;transform:scaleX(.9);transform-origin:0 50%">5</div>
<div class="t" style="left:477px;top:712.5px;font-size:12px;color:#1b1b1b;font-weight:normal;line-height:20px;transform:scaleX(.873);transform-origin:0 50%">09-16 15:59:44.000</div>
<div class="t mono" style="left:589px;top:712.5px;font-size:12px;color:#1b1b1b">NotTriggerScaleUp</div>
<div class="t mono" style="left:841px;top:712.5px;font-size:12px;color:#1b1b1b">pod didn't trigger scale-up: 1 max node group size reached</div>
<div class="t mono" style="left:1693px;top:712.5px;font-size:12px;color:#1b1b1b">proxy-agent-86b766c977-h7dcm</div>
<div class="t mono" style="left:2101.5px;top:712.5px;font-size:12px;color:#1b1b1b">prom-dku9i1i1</div>
<div class="a" style="left:409px;top:740px;width:2070px;height:1px;background:#e5e9f0;"></div>
<svg style="left:420px;top:753.3px" width="6" height="8.4" viewBox="0 0 6 8.4"><path d="M0 0L6 4.2 0 8.4z" fill="#1b1b1b"/></svg>
<div class="t" style="left:445px;top:747.5px;font-size:12px;color:#1b1b1b;font-weight:normal;line-height:20px;transform:scaleX(.9);transform-origin:0 50%">6</div>
<div class="t" style="left:477px;top:747.5px;font-size:12px;color:#1b1b1b;font-weight:normal;line-height:20px;transform:scaleX(.873);transform-origin:0 50%">09-16 15:59:54.000</div>
<div class="t mono" style="left:589px;top:747.5px;font-size:12px;color:#1b1b1b">NotTriggerScaleUp</div>
<div class="t mono" style="left:841px;top:747.5px;font-size:12px;color:#1b1b1b">pod didn't trigger scale-up: 1 max node group size reached</div>
<div class="t mono" style="left:1693px;top:747.5px;font-size:12px;color:#1b1b1b">tke-kube-state-metrics-0</div>
<div class="t mono" style="left:2101.5px;top:747.5px;font-size:12px;color:#1b1b1b">kube-system</div>
<div class="a" style="left:409px;top:775px;width:2070px;height:1px;background:#e5e9f0;"></div>
<svg style="left:420px;top:788.3px" width="6" height="8.4" viewBox="0 0 6 8.4"><path d="M0 0L6 4.2 0 8.4z" fill="#1b1b1b"/></svg>
<div class="t" style="left:445px;top:782.5px;font-size:12px;color:#1b1b1b;font-weight:normal;line-height:20px;transform:scaleX(.9);transform-origin:0 50%">7</div>
<div class="t" style="left:477px;top:782.5px;font-size:12px;color:#1b1b1b;font-weight:normal;line-height:20px;transform:scaleX(.873);transform-origin:0 50%">09-16 16:03:14.000</div>
<div class="t mono" style="left:589px;top:782.5px;font-size:12px;color:#1b1b1b">LeaderElection</div>
<div class="t mono" style="left:841px;top:782.5px;font-size:12px;color:#1b1b1b">cluster-autoscaler-886cd56c7-6r5rx became leader</div>
<div class="t mono" style="left:1693px;top:782.5px;font-size:12px;color:#1b1b1b">cluster-autoscaler</div>
<div class="t mono" style="left:2101.5px;top:782.5px;font-size:12px;color:#1b1b1b">kube-system</div>
<div class="a" style="left:409px;top:810px;width:2070px;height:1px;background:#e5e9f0;"></div>
<svg style="left:420px;top:823.3px" width="6" height="8.4" viewBox="0 0 6 8.4"><path d="M0 0L6 4.2 0 8.4z" fill="#1b1b1b"/></svg>
<div class="t" style="left:445px;top:817.5px;font-size:12px;color:#1b1b1b;font-weight:normal;line-height:20px;transform:scaleX(.9);transform-origin:0 50%">8</div>
<div class="t" style="left:477px;top:817.5px;font-size:12px;color:#1b1b1b;font-weight:normal;line-height:20px;transform:scaleX(.873);transform-origin:0 50%">09-16 16:03:28.000</div>
<div class="t mono" style="left:589px;top:817.5px;font-size:12px;color:#1b1b1b">ScaledUpGroup</div>
<div class="t mono" style="left:841px;top:817.5px;font-size:12px;color:#1b1b1b">Scale-up: setting group asg-9augleyb size to 4 instead of 2 (max: 5)</div>
<div class="t mono" style="left:1693px;top:817.5px;font-size:12px;color:#1b1b1b">cluster-autoscaler-status</div>
<div class="t mono" style="left:2101.5px;top:817.5px;font-size:12px;color:#1b1b1b">kube-system</div>
<div class="a" style="left:409px;top:845px;width:2070px;height:1px;background:#e5e9f0;"></div>
<svg style="left:420px;top:858.3px" width="6" height="8.4" viewBox="0 0 6 8.4"><path d="M0 0L6 4.2 0 8.4z" fill="#1b1b1b"/></svg>
<div class="t" style="left:445px;top:852.5px;font-size:12px;color:#1b1b1b;font-weight:normal;line-height:20px;transform:scaleX(.9);transform-origin:0 50%">9</div>
<div class="t" style="left:477px;top:852.5px;font-size:12px;color:#1b1b1b;font-weight:normal;line-height:20px;transform:scaleX(.873);transform-origin:0 50%">09-16 16:03:29.000</div>
<div class="t mono" style="left:589px;top:852.5px;font-size:12px;color:#1b1b1b">ScaledUpGroup</div>
<div class="t mono" style="left:841px;top:852.5px;font-size:12px;color:#1b1b1b">Scale-up: group asg-9augleyb size set to 4 instead of 2 (max: 5)</div>
<div class="t mono" style="left:1693px;top:852.5px;font-size:12px;color:#1b1b1b">cluster-autoscaler-status</div>
<div class="t mono" style="left:2101.5px;top:852.5px;font-size:12px;color:#1b1b1b">kube-system</div>
<div class="a" style="left:409px;top:880px;width:2070px;height:1px;background:#e5e9f0;"></div>
<svg style="left:420px;top:893.3px" width="6" height="8.4" viewBox="0 0 6 8.4"><path d="M0 0L6 4.2 0 8.4z" fill="#1b1b1b"/></svg>
<div class="t" style="left:445px;top:887.5px;font-size:12px;color:#1b1b1b;font-weight:normal;line-height:20px;transform:scaleX(.9);transform-origin:0 50%">10</div>
<div class="t" style="left:477px;top:887.5px;font-size:12px;color:#1b1b1b;font-weight:normal;line-height:20px;transform:scaleX(.873);transform-origin:0 50%">09-16 16:03:29.000</div>
<div class="t mono" style="left:589px;top:887.5px;font-size:12px;color:#1b1b1b">TriggeredScaleUp</div>
<div class="t mono" style="left:841px;top:887.5px;font-size:12px;color:#1b1b1b">pod triggered scale-up: [{asg-9augleyb 2-&gt;4 (max: 5)}]</div>
<div class="t mono" style="left:1693px;top:887.5px;font-size:12px;color:#1b1b1b">tke-kube-state-metrics-0</div>
<div class="t mono" style="left:2101.5px;top:887.5px;font-size:12px;color:#1b1b1b">kube-system</div>
<div class="a" style="left:409px;top:915px;width:2070px;height:1px;background:#e5e9f0;"></div>
<svg style="left:420px;top:928.3px" width="6" height="8.4" viewBox="0 0 6 8.4"><path d="M0 0L6 4.2 0 8.4z" fill="#1b1b1b"/></svg>
<div class="t" style="left:445px;top:922.5px;font-size:12px;color:#1b1b1b;font-weight:normal;line-height:20px;transform:scaleX(.9);transform-origin:0 50%">11</div>
<div class="t" style="left:477px;top:922.5px;font-size:12px;color:#1b1b1b;font-weight:normal;line-height:20px;transform:scaleX(.873);transform-origin:0 50%">09-16 16:03:29.000</div>
<div class="t mono" style="left:589px;top:922.5px;font-size:12px;color:#1b1b1b">TriggeredScaleUp</div>
<div class="t mono" style="left:841px;top:922.5px;font-size:12px;color:#1b1b1b">pod triggered scale-up: [{asg-9augleyb 2-&gt;4 (max: 5)}]</div>
<div class="t mono" style="left:1693px;top:922.5px;font-size:12px;color:#1b1b1b">proxy-agent-86b766c977-h7dcm</div>
<div class="t mono" style="left:2101.5px;top:922.5px;font-size:12px;color:#1b1b1b">prom-dku9i1i1</div>
<div class="a" style="left:409px;top:950px;width:2070px;height:1px;background:#e5e9f0;"></div>
<svg style="left:420px;top:963.3px" width="6" height="8.4" viewBox="0 0 6 8.4"><path d="M0 0L6 4.2 0 8.4z" fill="#1b1b1b"/></svg>
<div class="t" style="left:445px;top:957.5px;font-size:12px;color:#1b1b1b;font-weight:normal;line-height:20px;transform:scaleX(.9);transform-origin:0 50%">12</div>
<div class="t" style="left:477px;top:957.5px;font-size:12px;color:#1b1b1b;font-weight:normal;line-height:20px;transform:scaleX(.873);transform-origin:0 50%">09-16 16:03:29.000</div>
<div class="t mono" style="left:589px;top:957.5px;font-size:12px;color:#1b1b1b">TriggeredScaleUp</div>
<div class="t mono" style="left:841px;top:957.5px;font-size:12px;color:#1b1b1b">pod triggered scale-up: [{asg-9augleyb 2-&gt;4 (max: 5)}]</div>
<div class="t mono" style="left:1693px;top:957.5px;font-size:12px;color:#1b1b1b">proxy-agent-86b766c977-7t8rp</div>
<div class="t mono" style="left:2101.5px;top:957.5px;font-size:12px;color:#1b1b1b">prom-dku9i1i1</div>
<div class="a" style="left:409px;top:985px;width:2070px;height:1px;background:#e5e9f0;"></div>
<svg style="left:420px;top:998.3px" width="6" height="8.4" viewBox="0 0 6 8.4"><path d="M0 0L6 4.2 0 8.4z" fill="#1b1b1b"/></svg>
<div class="t" style="left:445px;top:992.5px;font-size:12px;color:#1b1b1b;font-weight:normal;line-height:20px;transform:scaleX(.9);transform-origin:0 50%">13</div>
<div class="t" style="left:477px;top:992.5px;font-size:12px;color:#1b1b1b;font-weight:normal;line-height:20px;transform:scaleX(.873);transform-origin:0 50%">09-16 16:03:39.000</div>
<div class="t mono" style="left:589px;top:992.5px;font-size:12px;color:#1b1b1b">NotTriggerScaleUp</div>
<div class="t mono" style="left:841px;top:992.5px;font-size:12px;color:#1b1b1b">pod didn't trigger scale-up: 1 Insufficient memory</div>
<div class="t mono" style="left:1693px;top:992.5px;font-size:12px;color:#1b1b1b">tke-kube-state-metrics-0</div>
<div class="t mono" style="left:2101.5px;top:992.5px;font-size:12px;color:#1b1b1b">kube-system</div>
<div class="a" style="left:409px;top:1020px;width:2070px;height:1px;background:#e5e9f0;"></div>
<div class="a" style="left:2490px;top:886px;width:23px;height:23px;border-radius:50%;background:#0049d6"></div>

</body></html>
